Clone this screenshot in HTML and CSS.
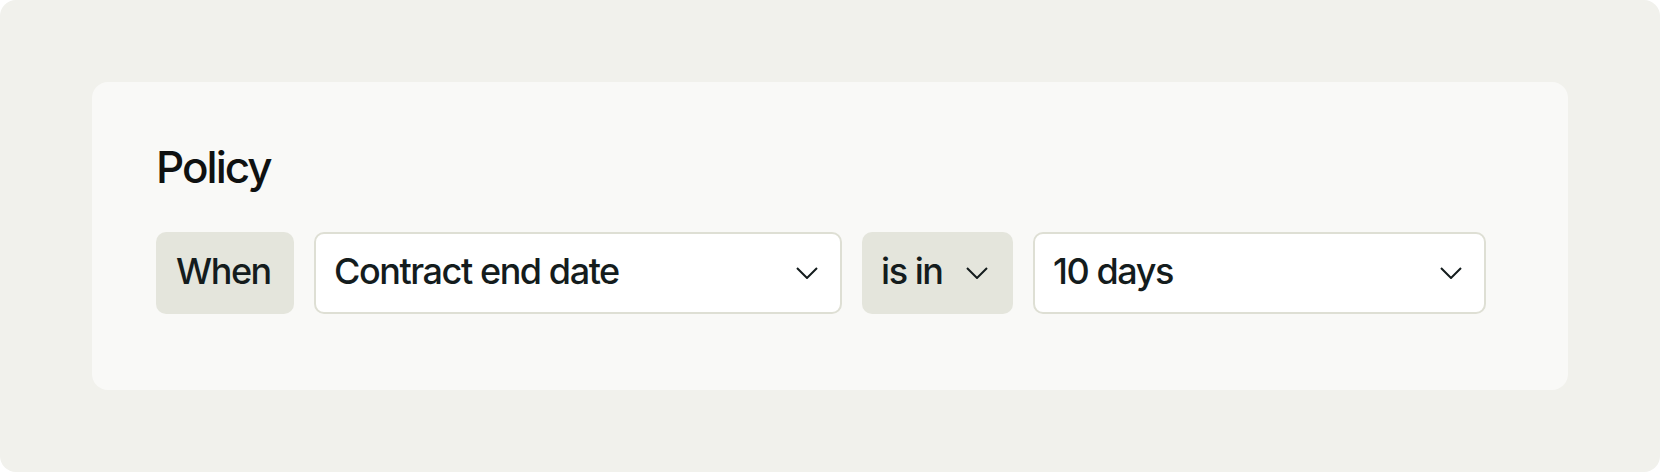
FILE: index.html
```html
<!DOCTYPE html>
<html lang="en">
<head>
<meta charset="utf-8">
<title>Policy</title>
<link rel="stylesheet" href="styles.css">
</head>
<body>
<div class="frame">
  <section class="card">
    <h1 class="title">Policy</h1>
    <div class="row">
      <div class="pill when">When</div>
      <div class="select field">
        <span class="label">Contract end date</span>
        <svg class="chev" viewBox="0 0 22 12" width="22" height="12"><path d="M1 1 L11 11 L21 1" fill="none" stroke="currentColor" stroke-width="2"/></svg>
      </div>
      <div class="pill op">
        <span class="label">is in</span>
        <svg class="chev" viewBox="0 0 22 12" width="22" height="12"><path d="M1 1 L11 11 L21 1" fill="none" stroke="currentColor" stroke-width="2"/></svg>
      </div>
      <div class="select days">
        <span class="label">10 days</span>
        <svg class="chev" viewBox="0 0 22 12" width="22" height="12"><path d="M1 1 L11 11 L21 1" fill="none" stroke="currentColor" stroke-width="2"/></svg>
      </div>
    </div>
  </section>
</div>
</body>
</html>
```
FILE: styles.css
```css
html, body {
  margin: 0;
  padding: 0;
  background: #ffffff;
}
body {
  font-family: Inter, "Noto Sans", sans-serif;
  color: #141c1d;
}
.frame {
  box-sizing: border-box;
  width: 1660px;
  height: 472px;
  background: #f1f1ec;
  border-radius: 16px;
  padding: 82px 92px;
}
.card {
  box-sizing: border-box;
  height: 308px;
  background: #f9f9f7;
  border-radius: 16px;
  padding: 61px 64px 0;
}
.title {
  margin: 0 0 41px;
  font-size: 44px;
  line-height: 48px;
  font-weight: 500;
  letter-spacing: -0.045em;
  color: #0f1111;
}
.row {
  display: flex;
  gap: 20px;
  align-items: stretch;
}
.pill, .select {
  box-sizing: border-box;
  height: 82px;
  border-radius: 10px;
  display: flex;
  align-items: center;
  font-size: 36px;
  font-weight: 500;
  letter-spacing: -0.04em;
  padding: 0 20px 4px;
}
.pill {
  background: #e4e5dc;
}
.when {
  width: 138px;
}
.op {
  width: 151px;
  gap: 23px;
  padding-left: 19px;
  padding-right: 25px;
}
.select {
  background: #ffffff;
  border: 2px solid #dedfd4;
  justify-content: space-between;
  padding: 0 22px 4px 18px;
}
.field {
  width: 528px;
}
.days {
  width: 453px;
}
.label {
  white-space: nowrap;
}
.chev {
  flex: none;
  color: #141c1d;
  position: relative;
  top: 2px;
}
```
